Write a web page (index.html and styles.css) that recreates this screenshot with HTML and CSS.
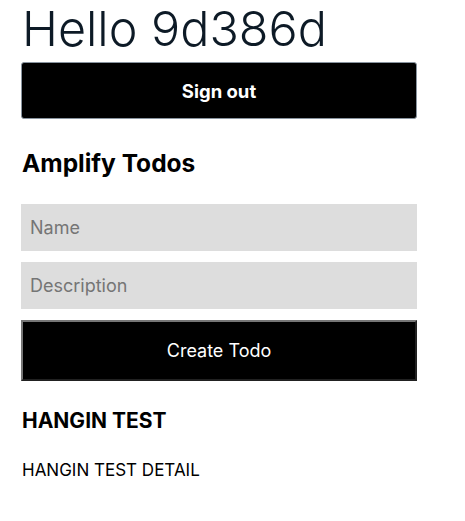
FILE: index.html
```html
<!DOCTYPE html>
<html>
<head>
<meta charset="utf-8">
<link rel="stylesheet" href="styles.css">
</head>
<body>
<div class="page">
  <h1 class="hello">Hello 9d386d</h1>
  <button class="signout">Sign out</button>
  <div class="todos">
    <h2 class="title">Amplify Todos</h2>
    <input class="field" placeholder="Name">
    <input class="field" placeholder="Description">
    <button class="create">Create Todo</button>
    <div class="todo">
      <p class="todo-name">HANGIN TEST</p>
      <p class="todo-desc">HANGIN TEST DETAIL</p>
    </div>
  </div>
</div>
</body>
</html>
```

FILE: styles.css
```css
* { box-sizing: border-box; }
body {
  margin: 0;
  background: #fff;
  font-family: Inter, "Noto Sans", sans-serif;
}
.page {
  width: 396px;
  margin-left: 21px;
  display: flex;
  flex-direction: column;
}
.hello {
  margin: 4px 0 0 1px;
  font-size: 48.5px;
  font-weight: 300;
  line-height: 50px;
  color: #0d1a26;
}
.signout {
  margin-top: 8px;
  height: 57px;
  width: 396px;
  background: #000;
  color: #fff;
  border: 1px solid #89949f;
  border-radius: 3px;
  font-family: Inter, sans-serif;
  font-weight: 700;
  font-size: 18.5px;
}
.todos {
  display: flex;
  flex-direction: column;
}
.title {
  margin: 30px 0 0 1px;
  font-size: 24.5px;
  font-weight: 700;
  line-height: 28px;
  color: #000;
}
.field {
  margin-top: 27px;
  height: 47px;
  border: none;
  background: #ddd;
  padding: 0 9px;
  font-family: Inter, sans-serif;
  font-size: 18px;
  color: #000;
}
.field + .field { margin-top: 11px; }
.field::placeholder { color: #757575; }
.create {
  margin-top: 11px;
  height: 61px;
  background: #000;
  color: #fff;
  border: 2px outset #767676;
  font-family: Inter, sans-serif;
  font-size: 18px;
  font-weight: 400;
}
.todo-name {
  margin: 28px 0 0 1px;
  font-size: 21px;
  font-weight: 700;
  line-height: 24px;
  color: #000;
}
.todo-desc {
  margin: 27px 0 0 1px;
  font-size: 17px;
  line-height: 20px;
  color: #000;
}
```
